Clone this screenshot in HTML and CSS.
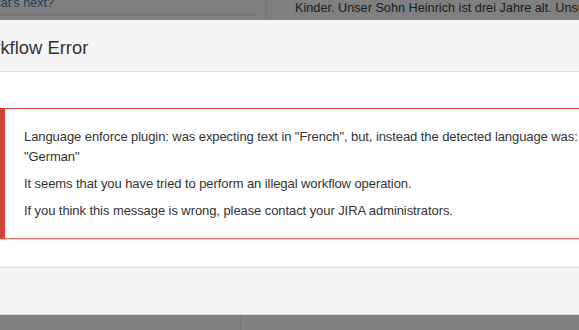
FILE: index.html
```html
<!DOCTYPE html>
<html lang="en">
<head>
    <meta charset="UTF-8" />
    <meta name="viewport" content="width=device-width, initial-scale=1.0"/>
    <title>Workflow Error</title>
    <link rel="stylesheet" href="styles.css">
</head>
<body>
    <div class="backdrop-top">
        <div class="side">
            <a href="#" class="next-link">What's next?</a>
        </div>
        <div class="story">Kinder. Unser Sohn Heinrich ist drei Jahre alt. Unsere Tochter</div>
    </div>

    <section class="dialog">
        <header class="dialog-header">
            <h2>Workflow Error</h2>
        </header>
        <div class="dialog-content">
            <div class="message-error">
                <p>Language enforce plugin: was expecting text in "French", but, instead the detected language was: "German"</p>
                <p>It seems that you have tried to perform an illegal workflow operation.</p>
                <p>If you think this message is wrong, please contact your JIRA administrators.</p>
            </div>
        </div>
        <footer class="dialog-footer"></footer>
    </section>

    <div class="backdrop-bottom">
        <div class="col"></div>
        <div class="col"></div>
    </div>
</body>
</html>
```

FILE: styles.css
```css
* {
    margin: 0;
    padding: 0;
    box-sizing: border-box;
}

html, body {
    overflow: hidden;
}

body {
    font-family: 'Liberation Sans', Arial, sans-serif;
    background: #808080;
    color: #333;
    width: 579px;
    height: 330px;
}

/* page behind the dialog, dimmed */
.backdrop-top {
    display: flex;
    height: 20px;
    background: #808080;
    overflow: hidden;
}

.side {
    flex: none;
    width: 267px;
    border-right: 1px solid #767676;
    padding-right: 10px;
}

.next-link {
    display: block;
    margin-left: -18px;
    margin-top: -5px;
    padding-bottom: 3px;
    border-bottom: 2px solid #7a7a7a;
    font-size: 12.5px;
    line-height: 16px;
    color: #1e3a5a;
    text-decoration: none;
}

.story {
    flex: none;
    padding-left: 28px;
    font-size: 12.7px;
    line-height: 17px;
    color: #1a1a1a;
    white-space: nowrap;
}

.dialog {
    margin-left: -53px;
    width: 700px;
    background: white;
}

.dialog-header {
    height: 52px;
    background: #f5f5f5;
    border-bottom: 1px solid #dedede;
    padding: 0 20px;
    display: flex;
    align-items: center;
}

.dialog-header h2 {
    font-size: 18.4px;
    font-weight: normal;
    color: #333;
    padding-top: 4px;
}

.dialog-content {
    padding: 36px 0 28px 53px;
}

.message-error {
    border-top: 1px solid #d04437;
    border-bottom: 1px solid #e07268;
    border-left: 5px solid #d04437;
    box-shadow: 0 1px 0 #f6d0cc;
    padding: 18px 20px 17px 19px;
    font-size: 13px;
    letter-spacing: -0.08px;
    line-height: 20px;
}

.message-error p + p {
    margin-top: 7px;
}

.dialog-footer {
    height: 48px;
    background: #f4f4f4;
    border-top: 1px solid #dedede;
    border-bottom: 1px solid #d6d6d6;
}

.backdrop-bottom {
    display: flex;
    height: 20px;
}

.backdrop-bottom .col:first-child {
    width: 241px;
    border-right: 1px solid #787878;
}
```
